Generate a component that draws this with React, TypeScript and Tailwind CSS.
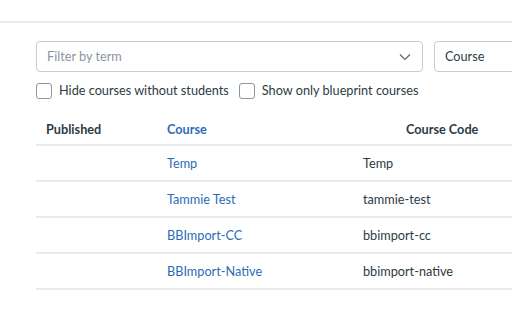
import React from 'react';

const rows = [
  { name: 'Temp', code: 'Temp' },
  { name: 'Tammie Test', code: 'tammie-test' },
  { name: 'BBImport-CC', code: 'bbimport-cc' },
  { name: 'BBImport-Native', code: 'bbimport-native' },
];

function Checkbox({ label }: { label: string }) {
  return (
    <label className="flex items-center gap-[7px] cursor-pointer">
      <span className="w-4 h-4 rounded-[3px] border border-[#8d959f] bg-white" />
      <span>{label}</span>
    </label>
  );
}

export default function App() {
  return (
    <div className="w-[512px] h-[320px] overflow-hidden bg-white text-[#2d3b45] text-[12.7px] font-['Lato','Liberation_Sans',sans-serif]">
      {/* top divider */}
      <div className="h-[21px]" />
      <div className="h-[2px] bg-[#e8eaec]" />

      <div className="pl-9 pt-[18px]">
        {/* filters */}
        <div className="flex gap-[11px] w-[600px]">
          <div className="w-[387px] h-[31px] flex items-center justify-between border border-[#c7cdd1] rounded-[4px] pl-[10px] pr-[11px]">
            <span className="text-[#8b959e]">Filter by term</span>
            <svg width="12" height="8" viewBox="0 0 12 8" fill="none" stroke="#5b6670" strokeWidth="1.2">
              <path d="M1 1.5 L6 6.5 L11 1.5" />
            </svg>
          </div>
          <div className="w-[160px] h-[31px] flex items-center border border-[#c7cdd1] rounded-[4px] pl-[10px]">
            <span>Course</span>
          </div>
        </div>

        <div className="flex items-center gap-[10px] mt-[9px]">
          <Checkbox label="Hide courses without students" />
          <Checkbox label="Show only blueprint courses" />
        </div>

        {/* table */}
        <div className="mt-[11px]">
          <div className="flex items-center h-[35px] pt-[3px] font-bold border-b-2 border-[#e8eaec]">
            <div className="w-[131px] pl-[10px]">Published</div>
            <div className="w-[196px] text-[#2b6cb8]">Course</div>
            <div className="pl-[43px]">Course Code</div>
          </div>
          {rows.map((r) => (
            <div key={r.name} className="flex items-center h-[36px] border-b-2 border-[#e8eaec]">
              <div className="w-[131px]" />
              <div className="w-[196px] text-[#2b6cb8]">{r.name}</div>
              <div>{r.code}</div>
            </div>
          ))}
        </div>
      </div>
    </div>
  );
}
